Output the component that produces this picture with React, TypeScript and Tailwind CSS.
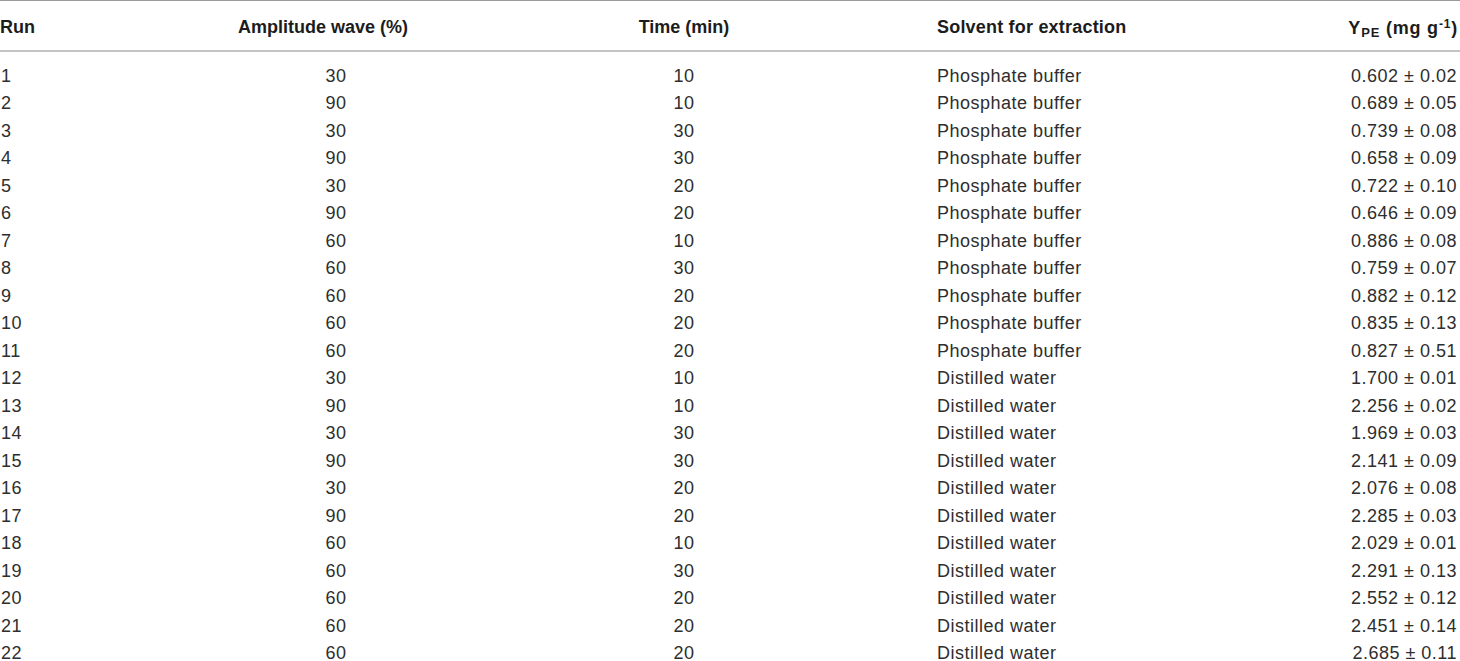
import React from 'react';

type Row = [number, number, number, string, string];

const rows: Row[] = [
  [1, 30, 10, 'Phosphate buffer', '0.602 ± 0.02'],
  [2, 90, 10, 'Phosphate buffer', '0.689 ± 0.05'],
  [3, 30, 30, 'Phosphate buffer', '0.739 ± 0.08'],
  [4, 90, 30, 'Phosphate buffer', '0.658 ± 0.09'],
  [5, 30, 20, 'Phosphate buffer', '0.722 ± 0.10'],
  [6, 90, 20, 'Phosphate buffer', '0.646 ± 0.09'],
  [7, 60, 10, 'Phosphate buffer', '0.886 ± 0.08'],
  [8, 60, 30, 'Phosphate buffer', '0.759 ± 0.07'],
  [9, 60, 20, 'Phosphate buffer', '0.882 ± 0.12'],
  [10, 60, 20, 'Phosphate buffer', '0.835 ± 0.13'],
  [11, 60, 20, 'Phosphate buffer', '0.827 ± 0.51'],
  [12, 30, 10, 'Distilled water', '1.700 ± 0.01'],
  [13, 90, 10, 'Distilled water', '2.256 ± 0.02'],
  [14, 30, 30, 'Distilled water', '1.969 ± 0.03'],
  [15, 90, 30, 'Distilled water', '2.141 ± 0.09'],
  [16, 30, 20, 'Distilled water', '2.076 ± 0.08'],
  [17, 90, 20, 'Distilled water', '2.285 ± 0.03'],
  [18, 60, 10, 'Distilled water', '2.029 ± 0.01'],
  [19, 60, 30, 'Distilled water', '2.291 ± 0.13'],
  [20, 60, 20, 'Distilled water', '2.552 ± 0.12'],
  [21, 60, 20, 'Distilled water', '2.451 ± 0.14'],
  [22, 60, 20, 'Distilled water', '2.685 ± 0.11'],
];

const grid = 'grid grid-cols-[200px_246px_476px_278px_260px]';

const App: React.FC = () => {
  return (
    <div className="w-[1460px] h-[661px] overflow-hidden bg-white font-['Liberation_Sans',Arial,sans-serif] text-[18px] tracking-[0.5px]">
      {/* header */}
      <div className={`${grid} h-[52px] pt-[4px] items-center border-t border-[#9a9a9a] border-b-2 border-b-[#c4c4c4] font-bold text-[#1c1c1c] tracking-normal`}>
        <div>Run</div>
        <div className="text-center">Amplitude wave (%)</div>
        <div className="text-center">Time (min)</div>
        <div className="pl-[15px] tracking-[0.2px]">Solvent for extraction</div>
        <div className="text-right pr-[2px] leading-none tracking-[0.8px]">
          Y<span className="text-[13px] relative top-[3px]">PE</span> (mg g<span className="text-[12px] relative -top-[6px]">-1</span>)
        </div>
      </div>

      {/* body */}
      <div className="pt-[10px] text-[#2e2e2e]">
        {rows.map(([run, amp, time, solvent, y]) => (
          <div key={run} className={`${grid} h-[27.5px] items-center leading-none`}>
            <div className="pl-[1px]">{run}</div>
            <div className="text-center pl-[26px]">{amp}</div>
            <div className="text-center">{time}</div>
            <div className="pl-[15px]">{solvent}</div>
            <div className="text-right pr-[3px]">{y}</div>
          </div>
        ))}
      </div>
    </div>
  );
};

export default App;
